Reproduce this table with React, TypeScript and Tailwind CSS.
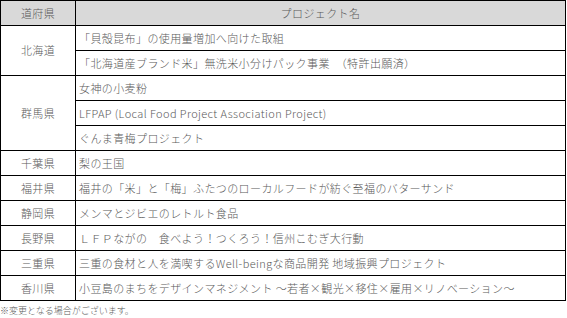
const rows: { pref: string; projects: string[] }[] = [
  {
    pref: "北海道",
    projects: [
      "「貝殻昆布」の使用量増加へ向けた取組",
      "「北海道産ブランド米」無洗米小分けパック事業　（特許出願済）",
    ],
  },
  {
    pref: "群馬県",
    projects: [
      "女神の小麦粉",
      "LFPAP (Local Food Project Association Project)",
      "ぐんま青梅プロジェクト",
    ],
  },
  { pref: "千葉県", projects: ["梨の王国"] },
  { pref: "福井県", projects: ["福井の「米」と「梅」ふたつのローカルフードが紡ぐ至福のバターサンド"] },
  { pref: "静岡県", projects: ["メンマとジビエのレトルト食品"] },
  { pref: "長野県", projects: ["ＬＦＰながの　食べよう！つくろう！信州こむぎ大行動"] },
  { pref: "三重県", projects: ["三重の食材と人を満喫するWell-beingな商品開発 地域振興プロジェクト"] },
  { pref: "香川県", projects: ["小豆島のまちをデザインマネジメント ～若者×観光×移住×雇用×リノベーション～"] },
];

export default function App() {
  return (
    <div className="w-[567px] h-[318px] bg-white text-[#5a5a5a] font-light font-['Noto_Sans_CJK_JP',sans-serif]">
      <table className="w-[566px] border-collapse table-fixed text-[11px] leading-none tracking-[0.4px]">
        <colgroup>
          <col className="w-[75px]" />
          <col />
        </colgroup>
        <thead>
          <tr className="h-[25px] bg-[#d9d9d9]">
            <th className="border border-black font-light text-center">道府県</th>
            <th className="border border-black font-light text-center">プロジェクト名</th>
          </tr>
        </thead>
        <tbody>
          {rows.map((r) =>
            r.projects.map((p, i) => (
              <tr key={r.pref + i} className="h-[25px]">
                {i === 0 && (
                  <td rowSpan={r.projects.length} className="border border-black text-center align-middle">
                    {r.pref}
                  </td>
                )}
                <td className="border border-black pl-[3px] whitespace-nowrap align-middle">{p}</td>
              </tr>
            ))
          )}
        </tbody>
      </table>
      <p className="mt-[5px] text-[9px] leading-none">※変更となる場合がございます。</p>
    </div>
  );
}
